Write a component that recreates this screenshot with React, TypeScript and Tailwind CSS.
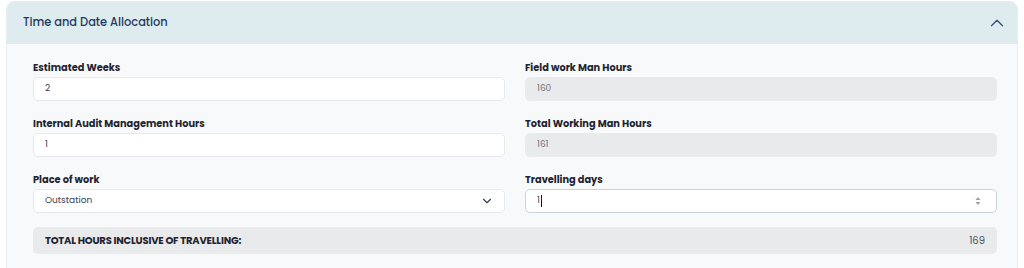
import { ChevronUp, ChevronDown } from "lucide-react";

const font = { fontFamily: "Poppins, 'Noto Sans', Inter, sans-serif" };

function Field({
  label,
  value,
  disabled,
}: {
  label: string;
  value: string;
  disabled?: boolean;
}) {
  return (
    <div className="flex flex-col">
      <label className="mb-[2px] text-[9.8px] font-bold leading-[14px] text-[#1f2430]">
        {label}
      </label>
      <div
        className={`flex h-6 items-center rounded-[5px] border px-[11px] text-[9px] ${
          disabled
            ? "border-[#e9eaec] bg-[#e9eaec] text-[#6b7280]"
            : "border-[#e6e8eb] bg-white text-[#374151]"
        }`}
      >
        {value}
      </div>
    </div>
  );
}

export default function App() {
  return (
    <div className="h-[268px] w-[1024px] overflow-hidden bg-white pt-px" style={font}>
      <div className="mx-[6px] overflow-hidden rounded-t-lg border border-[#e8ecee] bg-[#f8f9fa]">
        {/* Header */}
        <div className="flex h-[42px] items-center justify-between bg-[#deecef] pl-[16px] pr-[9px]">
          <h2 className="text-[11.4px] font-medium text-[#1e3a5f]">
            Time and Date Allocation
          </h2>
          <ChevronUp className="h-[22px] w-[22px] text-[#3b5675]" strokeWidth={1.5} />
        </div>

        {/* Body */}
        <div className="pb-[14px] pl-[26px] pr-[20px] pt-[17px]">
          <div className="grid grid-cols-2 gap-x-5 gap-y-[16px]">
            <Field label="Estimated Weeks" value="2" />
            <Field label="Field work Man Hours" value="160" disabled />

            <Field label="Internal Audit Management Hours" value="1" />
            <Field label="Total Working Man Hours" value="161" disabled />

            <div className="flex flex-col">
              <label className="mb-[2px] text-[9.8px] font-bold leading-[14px] text-[#1f2430]">
                Place of work
              </label>
              <div className="flex h-6 items-center justify-between rounded-[5px] border border-[#e6e8eb] bg-white pl-[11px] pr-[10px] text-[9px] text-[#374151]">
                <span>Outstation</span>
                <ChevronDown className="h-[14px] w-[14px] text-[#374151]" strokeWidth={2} />
              </div>
            </div>

            <div className="flex flex-col">
              <label className="mb-[2px] text-[9.8px] font-bold leading-[14px] text-[#1f2430]">
                Travelling days
              </label>
              <div className="flex h-6 items-center justify-between rounded-[5px] border border-[#c9d2dd] bg-white pl-[11px] pr-[15px] text-[9px] text-[#374151]">
                <span className="flex items-center">
                  1<span className="ml-px inline-block h-3 w-px bg-[#111827]" />
                </span>
                <svg width="6" height="10" viewBox="0 0 6 10" className="text-[#9aa1ab]">
                  <path d="M3 1 L5.5 4 H0.5 Z" fill="currentColor" />
                  <path d="M3 9 L5.5 6 H0.5 Z" fill="currentColor" />
                </svg>
              </div>
            </div>
          </div>

          {/* Total */}
          <div className="mt-[14px] flex h-[27px] items-center justify-between rounded-[5px] bg-[#e9eaec] pl-[12px] pr-[12px]">
            <span className="text-[10px] font-bold tracking-[-0.2px] text-[#1f2430]">
              TOTAL HOURS INCLUSIVE OF TRAVELLING:
            </span>
            <span className="text-[10px] text-[#4b5563]">169</span>
          </div>
        </div>
      </div>
    </div>
  );
}
